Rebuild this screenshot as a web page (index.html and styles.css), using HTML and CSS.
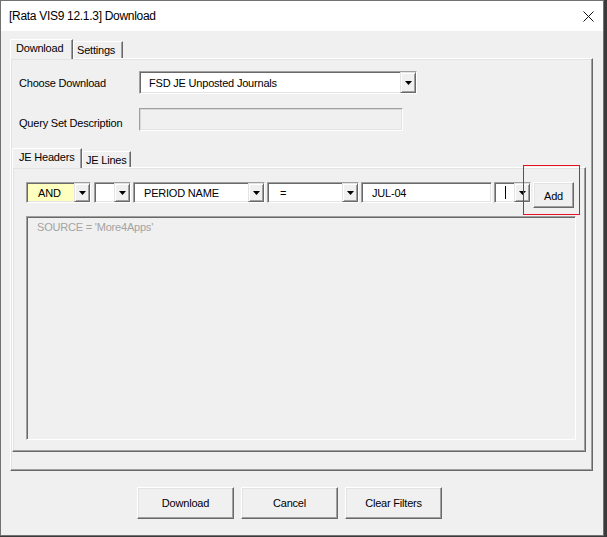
FILE: index.html
```html
<!DOCTYPE html>
<html>
<head>
<meta charset="utf-8">
<link rel="stylesheet" href="styles.css">
</head>
<body>
<div class="window">
  <div class="titlebar">
    <span class="title">[Rata VIS9 12.1.3] Download</span>
    <svg class="close" width="11" height="11" viewBox="0 0 11 11"><path d="M0.5 0.5 L10.5 10.5 M10.5 0.5 L0.5 10.5" stroke="#111" stroke-width="1" fill="none"/></svg>
  </div>
  <div class="client">
    <div class="multipage outer">
      <div class="tabs">
        <div class="tab active tab-download">Download</div>
        <div class="tab tab-settings">Settings</div>
      </div>
      <div class="panel outer-panel">
        <div class="form-row row1">
          <span class="label">Choose Download</span>
          <div class="combo combo-main"><span class="val">FSD JE Unposted Journals</span><span class="dd"><svg width="7" height="4" viewBox="0 0 7 4"><polygon points="0,0 7,0 3.5,4" fill="#000"/></svg></span></div>
        </div>
        <div class="form-row row2">
          <span class="label label-low">Query Set Description</span>
          <div class="textbox disabled"></div>
        </div>
        <div class="multipage inner">
          <div class="tabs">
            <div class="tab active tab-headers">JE Headers</div>
            <div class="tab tab-lines">JE Lines</div>
          </div>
          <div class="panel inner-panel">
            <div class="filter-row">
              <div class="combo c-and"><span class="val">AND</span><span class="dd"><svg width="7" height="4" viewBox="0 0 7 4"><polygon points="0,0 7,0 3.5,4" fill="#000"/></svg></span></div>
              <div class="combo c-blank"><span class="val"></span><span class="dd"><svg width="7" height="4" viewBox="0 0 7 4"><polygon points="0,0 7,0 3.5,4" fill="#000"/></svg></span></div>
              <div class="combo c-field"><span class="val">PERIOD NAME</span><span class="dd"><svg width="7" height="4" viewBox="0 0 7 4"><polygon points="0,0 7,0 3.5,4" fill="#000"/></svg></span></div>
              <div class="combo c-op"><span class="val">=</span><span class="dd"><svg width="7" height="4" viewBox="0 0 7 4"><polygon points="0,0 7,0 3.5,4" fill="#000"/></svg></span></div>
              <div class="textbox c-value"><span class="val">JUL-04</span></div>
              <div class="combo c-small"><span class="val"><span class="caret"></span></span><span class="dd"><svg width="7" height="4" viewBox="0 0 7 4"><polygon points="0,0 7,0 3.5,4" fill="#000"/></svg></span></div>
              <div class="btn btn-add">Add</div>
            </div>
            <div class="listbox">SOURCE = 'More4Apps'</div>
            <div class="highlight"></div>
          </div>
        </div>
      </div>
    </div>
    <div class="buttons">
      <div class="btn btn-main">Download</div>
      <div class="btn btn-main">Cancel</div>
      <div class="btn btn-main">Clear Filters</div>
    </div>
  </div>
</div>
</body>
</html>
```
FILE: styles.css
```css
html, body {
  margin: 0;
  padding: 0;
}
body {
  background: #3a3a3a;
  font-family: "Liberation Sans", Arial, sans-serif;
  font-size: 11px;
  letter-spacing: -0.2px;
  color: #000;
}
.window {
  width: 604px;
  height: 536px;
  box-sizing: border-box;
  border: 1px solid #727272;
  background: #f0f0f0;
  display: flex;
  flex-direction: column;
}
.titlebar {
  height: 30px;
  background: #fff;
  display: flex;
  align-items: center;
  justify-content: space-between;
  padding: 0 9px 0 8px;
  flex: none;
}
.title {
  font-family: "Liberation Sans", Arial, sans-serif;
  font-size: 12px;
  color: #000;
  letter-spacing: -0.3px;
}
.close {
  display: block;
}
.client {
  padding: 8px 0 0 9px;
  flex: 1;
}
.tabs {
  display: flex;
  align-items: flex-end;
  height: 19px;
}
.tab {
  box-sizing: border-box;
  border-top: 1px solid #fff;
  border-left: 1px solid #fff;
  border-right: 1px solid #696969;
  box-shadow: inset -1px 0 0 #a0a0a0;
  background: #f0f0f0;
  line-height: 13px;
  padding-top: 2px;
  white-space: nowrap;
}
.tab.active {
  height: 20px;
  margin-bottom: -1px;
  position: relative;
  z-index: 1;
  padding-top: 2px;
}
.tab-download { width: 63px; padding-left: 5px; }
.tab-settings { width: 50px; height: 17px; padding-left: 3px; padding-top: 2px; }
.tab-headers { width: 70px; padding-left: 6px; }
.tab-lines { width: 49px; height: 16px; padding-left: 3px; padding-top: 2px; }

.panel {
  box-sizing: border-box;
  border-top: 1px solid #fff;
  border-left: 1px solid #fff;
  border-right: 1px solid #696969;
  border-bottom: 1px solid #696969;
  box-shadow: inset -1px -1px 0 #a0a0a0, inset 1px 1px 0 #e3e3e3;
}
.outer-panel {
  width: 583px;
  height: 413px;
  padding: 12px 0 0 8px;
}
.form-row {
  display: flex;
  align-items: center;
  height: 23px;
}
.row2 { margin-top: 14px; }
.label {
  width: 120px;
  flex: none;
}
.label-low {
  margin-top: 6px;
}
.combo, .textbox, .listbox {
  box-sizing: border-box;
  border-top: 1px solid #a0a0a0;
  border-left: 1px solid #a0a0a0;
  border-right: 1px solid #fff;
  border-bottom: 1px solid #fff;
  box-shadow: inset 1px 1px 0 #696969, inset -1px -1px 0 #e3e3e3;
}
.combo {
  display: flex;
  background: #fff;
  flex: none;
}
.combo .val {
  flex: 1;
  display: flex;
  align-items: center;
  padding-left: 9px;
  white-space: nowrap;
  overflow: hidden;
}
.dd {
  width: 16px;
  box-sizing: border-box;
  flex: none;
  background: #f0f0f0;
  border-top: 1px solid #e3e3e3;
  border-left: 1px solid #e3e3e3;
  border-right: 1px solid #696969;
  border-bottom: 1px solid #696969;
  box-shadow: inset 1px 1px 0 #fff, inset -1px -1px 0 #a0a0a0;
  display: flex;
  align-items: center;
  justify-content: center;
}
.dd svg { display: block; margin-left: 1px; }
.combo-main {
  width: 278px;
  height: 23px;
}
.combo-main .dd { height: 21px; }
.combo-main .val { padding-left: 9px; }
.textbox.disabled {
  width: 264px;
  height: 23px;
  background: #f0f0f0;
  box-shadow: inset 1px 1px 0 #d8d8d8, inset -1px -1px 0 #e3e3e3;
}
.inner {
  margin-top: 17px;
  margin-left: -7px;
  width: 574px;
}
.inner-panel {
  width: 574px;
  height: 285px;
  padding: 14px 0 0 13px;
  position: relative;
}
.filter-row {
  display: flex;
  align-items: flex-start;
  height: 26px;
}
.filter-row .combo, .filter-row .textbox {
  height: 21px;
}
.c-and { width: 65px; background: #ffffc0; margin-right: 3px; }
.c-and .val { padding-left: 11px; }
.c-blank { width: 37px; margin-right: 2px; }
.c-field { width: 132px; margin-right: 2px; }
.c-field .val { padding-left: 10px; }
.c-op { width: 92px; margin-right: 2px; }
.c-op .val { padding-left: 12px; }
.c-value {
  width: 131px;
  background: #fff;
  margin-right: 2px;
  display: flex;
  align-items: center;
  flex: none;
}
.c-value .val { padding-left: 10px; }
.c-small { width: 37px; margin-right: 2px; }
.c-small .val { padding-left: 10px; }
.caret {
  display: block;
  width: 0;
  height: 13px;
  border-left: 1px solid #000;
}
.btn {
  box-sizing: border-box;
  background: #f0f0f0;
  border-top: 1px solid #fff;
  border-left: 1px solid #fff;
  border-right: 1px solid #696969;
  border-bottom: 1px solid #696969;
  box-shadow: inset -1px -1px 0 #a0a0a0, inset 1px 1px 0 #e3e3e3;
  display: flex;
  align-items: center;
  justify-content: center;
  flex: none;
}
.btn-add {
  width: 41px;
  height: 26px;
  padding-top: 2px;
}
.listbox {
  margin-top: 8px;
  width: 550px;
  height: 224px;
  background: #f0f0f0;
  color: #a3a3a3;
  padding: 4px 0 0 10px;
  line-height: 13px;
  box-shadow: inset 1px 1px 0 #696969, inset -1px -1px 0 #f0f0f0;
}
.highlight {
  position: absolute;
  left: 510px;
  top: -3px;
  width: 57px;
  height: 50px;
  box-sizing: border-box;
  border: 1px solid #e81123;
}
.buttons {
  display: flex;
  gap: 7px;
  margin-top: 16px;
  margin-left: 127px;
}
.btn-main {
  width: 97px;
  height: 32px;
}
```
